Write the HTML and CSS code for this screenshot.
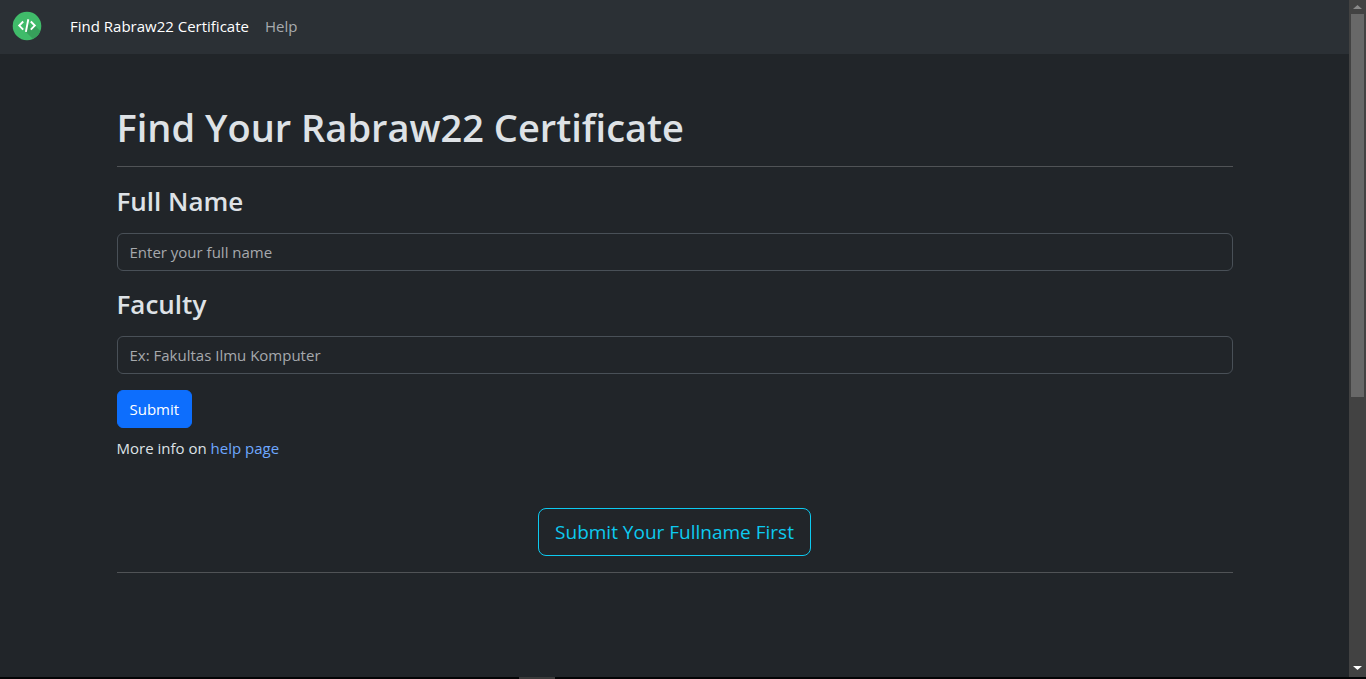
FILE: index.html
```html
<!DOCTYPE html>
<html lang="en">
<head>
<meta charset="utf-8">
<meta name="viewport" content="width=device-width, initial-scale=1">
<title>Find Your Rabraw22 Certificate</title>
<link rel="stylesheet" href="styles.css">
</head>
<body>
<div class="window">
  <div class="page">
    <nav class="navbar">
      <a class="brand" href="#" aria-label="Home">
        <svg class="logo" viewBox="0 0 30 30" aria-hidden="true">
          <defs><clipPath id="disc"><circle cx="15" cy="15" r="14.3"/></clipPath></defs>
          <circle cx="15" cy="15" r="14.3" fill="#40bb6a"/>
          <path clip-path="url(#disc)" fill="#379f5b" d="M22.8 14.600 30 21.800V30H23L14 21l2.500-10 2.500 7z"/>
          <path d="M11.200 10.500 7.200 14.600l4 4.100M18.800 10.500l4 4.100-4 4.100M16.300 8.300l-2.400 12.600" fill="none" stroke="#fff" stroke-width="1.900"/>
        </svg>
      </a>
      <a class="nav-link active" href="#">Find Rabraw22 Certificate</a>
      <a class="nav-link" href="#help">Help</a>
    </nav>
    <main class="container">
      <h1 class="title">Find Your Rabraw22 Certificate</h1>
      <hr class="rule">
      <form class="form">
        <div class="field">
          <label class="label" for="fullname">Full Name</label>
          <input class="input" id="fullname" type="text" placeholder="Enter your full name">
        </div>
        <div class="field">
          <label class="label" for="faculty">Faculty</label>
          <input class="input" id="faculty" type="text" placeholder="Ex: Fakultas Ilmu Komputer">
        </div>
        <button class="submit" type="submit">Submit</button>
      </form>
      <p class="info">More info on <a class="link" href="#help">help page</a></p>
      <div class="result">
        <button class="result-button" type="button">Submit Your Fullname First</button>
      </div>
      <hr class="rule">
    </main>
  </div>
  <div class="scrollbar" aria-hidden="true">
    <svg class="arrow" viewBox="0 0 17 14"><path d="M4 9h9L8.500 5z" fill="#898989"/></svg>
    <div class="track"><div class="thumb"></div></div>
    <svg class="arrow" viewBox="0 0 17 14"><path d="M4 3h9L8.500 7z" fill="#fff"/></svg>
  </div>
</div>
<div class="edge" aria-hidden="true"><div class="edge-tab"></div></div>
</body>
</html>
```
FILE: styles.css
```css
* { box-sizing: border-box; }

body {
  display: flex;
  flex-direction: column;
  height: 100vh;
  margin: 0;
  overflow: hidden;
  background: #212529;
  color: #dee2e6;
  font: 15px/24px "Open Sans", "Noto Sans", sans-serif;
}

.window { display: flex; flex: 1; min-height: 0; }
.page { flex: 1; min-width: 0; overflow: hidden; }

.navbar {
  display: flex;
  align-items: center;
  padding: 6px 12px 8px;
  background: #2b3035;
}
.brand { display: flex; margin-right: 20px; }
.logo { width: 30px; height: 30px; }
.nav-link {
  padding: 8px;
  color: #a8abae;
  text-decoration: none;
}
.nav-link.active { color: #fff; }

.container {
  max-width: 1140px;
  margin: 0 auto;
  padding: 48px 12px;
}
.title {
  margin: 0;
  font-size: 38px;
  line-height: 50px;
  font-weight: 600;
}
.rule {
  margin: 16px 0;
  border: 0;
  border-top: 1px solid #505356;
}
.title + .rule { margin-top: 14px; }
.form { display: flex; flex-direction: column; align-items: flex-start; gap: 16px; }
.field { display: flex; flex-direction: column; gap: 14px; width: 100%; }
.field:first-child { padding-top: 1px; }
.label { font-size: 26px; line-height: 35px; font-weight: 600; }
.input {
  width: 100%;
  padding: 6px 12px;
  border: 1px solid #495057;
  border-radius: 6px;
  background: #212529;
  color: #dee2e6;
  font: inherit;
}
.input::placeholder { color: #a6a9ad; opacity: 1; }
.submit {
  padding: 6px 12px;
  border: 1px solid #0d6efd;
  border-radius: 6px;
  background: #0d6efd;
  color: #fff;
  font: inherit;
}
.info { margin: 8px 0 48px; }
.link { color: #6ea8fe; text-decoration: none; }
.result { display: flex; justify-content: center; }
.result-button {
  padding: 8px 16px;
  border: 1px solid #0dcaf0;
  border-radius: 8px;
  background: transparent;
  color: #0dcaf0;
  font: inherit;
  font-size: 19px;
  line-height: 30px;
}

.scrollbar { display: flex; flex-direction: column; width: 17px; background: #424242; }
.arrow { width: 17px; height: 14px; }
.track { flex: 1; padding: 0 2px; }
.thumb { height: 59%; background: #686868; }

.edge { height: 2px; background: #030405; }
.edge-tab { width: 36px; height: 2px; margin-left: 38%; background: #3a3a3a; }
```
